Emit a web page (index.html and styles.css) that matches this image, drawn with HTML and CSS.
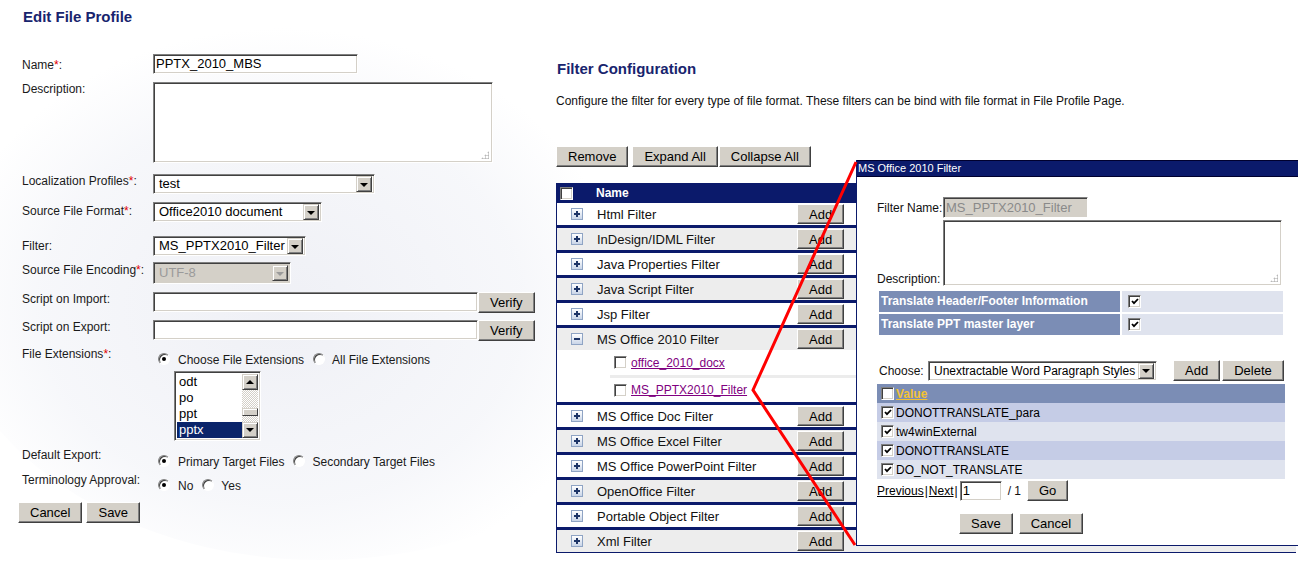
FILE: index.html
```html
<!DOCTYPE html>
<html>
<head>
<meta charset="utf-8">
<title>Edit File Profile</title>
<link rel="stylesheet" href="styles.css">
</head>
<body>
<div class="globe"></div>
<div class="page">
  <section class="profile">
    <h1 class="title">Edit File Profile</h1>
    <div class="form">
      <div class="row row-name">
        <span class="lbl pad4">Name<span class="req">*</span>:</span>
        <div class="field name-input">PPTX_2010_MBS</div>
      </div>
      <div class="row row-desc">
        <span class="lbl">Description:</span>
        <div class="field area desc-area"><span class="grip"></span></div>
      </div>
      <div class="row row-loc">
        <span class="lbl">Localization Profiles<span class="req">*</span>:</span>
        <div class="select sel-loc"><span class="sel-val">test</span><span class="sel-btn"></span></div>
      </div>
      <div class="row row-format">
        <span class="lbl pad2">Source File Format<span class="req">*</span>:</span>
        <div class="select sel-format"><span class="sel-val">Office2010 document</span><span class="sel-btn"></span></div>
      </div>
      <div class="row row-filter">
        <span class="lbl pad3">Filter:</span>
        <div class="select sel-filter"><span class="sel-val">MS_PPTX2010_Filter</span><span class="sel-btn"></span></div>
      </div>
      <div class="row row-enc">
        <span class="lbl pad2">Source File Encoding<span class="req">*</span>:</span>
        <div class="select disabled sel-enc"><span class="sel-val">UTF-8</span><span class="sel-btn"></span></div>
      </div>
      <div class="row row-import">
        <span class="lbl">Script on Import:</span>
        <div class="field script-input"></div>
        <button class="btn verify">Verify</button>
      </div>
      <div class="row row-export">
        <span class="lbl">Script on Export:</span>
        <div class="field script-input"></div>
        <button class="btn verify">Verify</button>
      </div>
      <div class="row row-ext">
        <span class="lbl">File Extensions<span class="req">*</span>:</span>
        <div class="choices ch-ext">
          <span class="radio on"></span><span class="choice-txt">Choose File Extensions</span>
          <span class="radio"></span><span class="choice-txt">All File Extensions</span>
        </div>
      </div>
      <div class="row row-list">
        <span class="lbl"></span>
        <div class="listbox">
          <div class="list-items">
            <div class="item">odt</div>
            <div class="item">po</div>
            <div class="item">ppt</div>
            <div class="item sel">pptx</div>
          </div>
          <div class="scroll">
            <span class="sb-btn up"></span>
            <span class="sb-track"><span class="sb-thumb"></span></span>
            <span class="sb-btn down"></span>
          </div>
        </div>
      </div>
      <div class="row row-default">
        <span class="lbl">Default Export:</span>
        <div class="choices ch-default">
          <span class="radio on"></span><span class="choice-txt">Primary Target Files</span>
          <span class="radio"></span><span class="choice-txt">Secondary Target Files</span>
        </div>
      </div>
      <div class="row row-term">
        <span class="lbl">Terminology Approval:</span>
        <div class="choices ch-term">
          <span class="radio on"></span><span class="choice-txt">No</span>
          <span class="radio"></span><span class="choice-txt">Yes</span>
        </div>
      </div>
      <div class="actions">
        <button class="btn">Cancel</button>
        <button class="btn">Save</button>
      </div>
    </div>
  </section>

  <section class="filters">
    <h2 class="title">Filter Configuration</h2>
    <p class="intro">Configure the filter for every type of file format. These filters can be bind with file format in File Profile Page.</p>
    <div class="toolbar">
      <button class="btn">Remove</button>
      <button class="btn">Expand All</button>
      <button class="btn">Collapse All</button>
    </div>
    <div class="ftable">
      <div class="fhead"><span class="cb"></span><span class="fhead-name">Name</span></div>
      <div class="frow"><span class="exp"></span><span class="fname">Html Filter</span><button class="btn add">Add</button></div>
      <div class="frow alt"><span class="exp"></span><span class="fname">InDesign/IDML Filter</span><button class="btn add">Add</button></div>
      <div class="frow"><span class="exp"></span><span class="fname">Java Properties Filter</span><button class="btn add">Add</button></div>
      <div class="frow alt"><span class="exp"></span><span class="fname">Java Script Filter</span><button class="btn add">Add</button></div>
      <div class="frow"><span class="exp"></span><span class="fname">Jsp Filter</span><button class="btn add">Add</button></div>
      <div class="frow alt open"><span class="exp minus"></span><span class="fname">MS Office 2010 Filter</span><button class="btn add">Add</button></div>
      <div class="subrows">
        <div class="subrow first"><span class="cb"></span><a class="sublink">office_2010_docx</a></div>
        <div class="subrow"><span class="cb"></span><a class="sublink">MS_PPTX2010_Filter</a></div>
      </div>
      <div class="frow"><span class="exp"></span><span class="fname">MS Office Doc Filter</span><button class="btn add">Add</button></div>
      <div class="frow alt"><span class="exp"></span><span class="fname">MS Office Excel Filter</span><button class="btn add">Add</button></div>
      <div class="frow"><span class="exp"></span><span class="fname">MS Office PowerPoint Filter</span><button class="btn add">Add</button></div>
      <div class="frow alt"><span class="exp"></span><span class="fname">OpenOffice Filter</span><button class="btn add">Add</button></div>
      <div class="frow"><span class="exp"></span><span class="fname">Portable Object Filter</span><button class="btn add">Add</button></div>
      <div class="frow alt last"><span class="exp"></span><span class="fname">Xml Filter</span><button class="btn add">Add</button><span class="fdesc">The filter for XML files.</span></div>
    </div>
  </section>

  <div class="popup">
    <div class="pop-title">MS Office 2010 Filter</div>
    <div class="pop-body">
      <div class="pf-name">
        <span class="pf-lbl">Filter Name:</span>
        <div class="field disabled fn-input">MS_PPTX2010_Filter</div>
      </div>
      <div class="pf-desc">
        <span class="pf-lbl">Description:</span>
        <div class="field area pf-area"><span class="grip"></span></div>
      </div>
      <div class="opts">
        <span class="opt-lbl">Translate Header/Footer Information</span>
        <span class="opt-val"><span class="cb"><svg class="tick" viewBox="0 0 8 7"><path d="M1 3l2 2.2L7 1"/></svg></span></span>
        <span class="opt-lbl">Translate PPT master layer</span>
        <span class="opt-val"><span class="cb"><svg class="tick" viewBox="0 0 8 7"><path d="M1 3l2 2.2L7 1"/></svg></span></span>
      </div>
      <div class="choose">
        <span class="choose-lbl">Choose:</span>
        <div class="select sel-choose"><span class="sel-val">Unextractable Word Paragraph Styles</span><span class="sel-btn"></span></div>
        <button class="btn add-style">Add</button>
        <button class="btn del-style">Delete</button>
      </div>
      <div class="vtable">
        <div class="vhead"><span class="cb"></span><a class="vlink">Value</a></div>
        <div class="vrow"><span class="cb"><svg class="tick" viewBox="0 0 8 7"><path d="M1 3l2 2.2L7 1"/></svg></span><span class="vtext">DONOTTRANSLATE_para</span></div>
        <div class="vrow light"><span class="cb"><svg class="tick" viewBox="0 0 8 7"><path d="M1 3l2 2.2L7 1"/></svg></span><span class="vtext">tw4winExternal</span></div>
        <div class="vrow"><span class="cb"><svg class="tick" viewBox="0 0 8 7"><path d="M1 3l2 2.2L7 1"/></svg></span><span class="vtext">DONOTTRANSLATE</span></div>
        <div class="vrow light"><span class="cb"><svg class="tick" viewBox="0 0 8 7"><path d="M1 3l2 2.2L7 1"/></svg></span><span class="vtext">DO_NOT_TRANSLATE</span></div>
      </div>
      <div class="pager">
        <a class="plink">Previous</a><span class="pipe">|</span><a class="plink">Next</a><span class="pipe">|</span>
        <div class="field page-input">1</div>
        <span class="page-total">/ 1</span>
        <button class="btn go">Go</button>
      </div>
      <div class="pop-actions">
        <button class="btn">Save</button>
        <button class="btn">Cancel</button>
      </div>
    </div>
  </div>

  <svg class="callout" width="1304" height="572" viewBox="0 0 1304 572">
    <polyline points="856,162 753,390 855,545" fill="none" stroke="#ff0000" stroke-width="3" stroke-linejoin="miter"/>
  </svg>
</div>
</body>
</html>
```

FILE: styles.css
```css
* { box-sizing: border-box; }
html, body { margin: 0; padding: 0; }
body {
  width: 1304px;
  height: 572px;
  overflow: hidden;
  position: relative;
  background: #fff;
  font-family: "Liberation Sans", Arial, sans-serif;
  font-size: 12px;
  color: #1a1a1a;
}

.globe {
  position: absolute;
  left: -60px;
  top: 0;
  width: 760px;
  height: 560px;
  border-radius: 50%;
  background:
    radial-gradient(ellipse 45% 50% at 45% 55%, rgba(226,228,238,0.55) 0%, rgba(236,238,245,0.45) 70%, rgba(255,255,255,0) 100%);
  pointer-events: none;
}

.page { position: relative; display: flex; height: 572px; }

/* ---------- left: profile form ---------- */
.profile { width: 556px; flex: none; padding: 8px 0 0 22px; }
.title {
  margin: 0;
  font-size: 15px;
  line-height: 18px;
  font-weight: bold;
  color: #18246e;
  padding-left: 1px;
}
.form { margin-top: 28px; }
.row { display: flex; align-items: flex-start; }
.lbl { width: 131px; flex: none; line-height: 14px; color: #1a1a1a; }
.pad2 { padding-top: 2px; }
.pad3 { padding-top: 3px; }
.pad4 { padding-top: 4px; }
.req { color: #e00000; }

.row-name { height: 28px; }
.row-desc { height: 92px; }
.row-loc { height: 28px; }
.row-format { height: 34px; }
.row-filter { height: 25px; }
.row-enc { height: 31px; }
.row-import { height: 28px; }
.row-export { height: 27px; }
.row-ext { height: 24px; }
.row-list { height: 77px; }
.row-default { height: 25px; }
.row-term { height: 29px; }

.field {
  height: 20px;
  background: #fff;
  border: 1px solid;
  border-color: #808080 #fff #fff #808080;
  box-shadow: inset 1px 1px 0 #404040, inset -1px -1px 0 #d4d0c8;
  font-size: 13px;
  line-height: 18px;
  padding: 0 2px;
  white-space: nowrap;
  overflow: hidden;
  color: #000;
}
.field.disabled { background: #d4d0c8; color: #8a8a8a; }
.area { position: relative; }
.grip {
  position: absolute;
  right: 3px;
  bottom: 3px;
  width: 8px;
  height: 8px;
  background:
    radial-gradient(circle, #b8b8b8 0.9px, transparent 1.2px) 0 0 / 3px 3px;
  clip-path: polygon(100% 0, 100% 100%, 0 100%);
}
.name-input { width: 205px; }
.desc-area { width: 340px; height: 81px; }
.script-input { width: 325px; }
.verify { margin-left: 3px; }

.select {
  display: flex;
  height: 20px;
  background: #fff;
  border: 1px solid;
  border-color: #808080 #fff #fff #808080;
  box-shadow: inset 1px 1px 0 #404040, inset -1px -1px 0 #d4d0c8;
  padding: 2px;
}
.sel-val {
  flex: 1;
  font-size: 13px;
  line-height: 16px;
  height: 16px;
  margin-top: -1px;
  padding-left: 3px;
  white-space: nowrap;
  overflow: hidden;
  color: #000;
}
.sel-btn {
  width: 16px;
  height: 16px;
  margin-top: -1px;
  flex: none;
  background: #d4d0c8;
  border: 1px solid;
  border-color: #d4d0c8 #404040 #404040 #d4d0c8;
  box-shadow: inset 1px 1px 0 #fff, inset -1px -1px 0 #808080;
  display: flex;
  align-items: center;
  justify-content: center;
}
.sel-btn::after {
  content: "";
  border-left: 4px solid transparent;
  border-right: 4px solid transparent;
  border-top: 4px solid #000;
  margin-top: 1px;
}
.select.disabled { background: #d4d0c8; height: 22px; margin-top: 1px; padding-top: 3px; }
.select.disabled .sel-val { color: #9a9a9a; }
.select.disabled .sel-btn::after { border-top-color: #9a9a9a; }
.sel-loc { width: 222px; }
.sel-format { width: 169px; }
.sel-filter { width: 153px; }
.sel-enc { width: 138px; }

.btn {
  height: 21px;
  padding: 0 11px;
  margin: 0;
  background: #d4d0c8;
  border: 1px solid;
  border-color: #fff #404040 #404040 #fff;
  box-shadow: inset -1px -1px 0 #808080;
  font-family: "Liberation Sans", Arial, sans-serif;
  font-size: 13px;
  line-height: 18px;
  color: #000;
  flex: none;
}

.choices { display: flex; align-items: center; line-height: 14px; }
.ch-ext { margin-top: 4px; }
.ch-default { margin-top: 5px; }
.ch-term { margin-top: 4px; }
.radio {
  width: 12px;
  height: 12px;
  flex: none;
  border-radius: 50%;
  background: #fff;
  border: 1px solid;
  border-color: #808080 #fff #fff #808080;
  box-shadow: inset 1px 1px 0 #404040;
  position: relative;
  margin: 0 8px 0 5px;
}
.choice-txt + .radio { margin-left: 9px; margin-right: 7px; }
.radio.on::after {
  content: "";
  position: absolute;
  left: 3px;
  top: 3px;
  width: 4px;
  height: 4px;
  border-radius: 50%;
  background: #000;
}
.choice-txt { color: #1a1a1a; padding-top: 2px; }

.listbox {
  margin-left: 21px;
  width: 87px;
  height: 70px;
  display: flex;
  background: #fff;
  border: 1px solid;
  border-color: #808080 #fff #fff #808080;
  box-shadow: inset 1px 1px 0 #404040, inset -1px -1px 0 #d4d0c8;
  padding: 2px;
}
.list-items { flex: 1; }
.item { height: 16px; line-height: 16px; padding-left: 2px; font-size: 13px; color: #000; }
.item.sel { background: #0a246a; color: #fff; }
.scroll { width: 16px; display: flex; flex-direction: column; }
.sb-btn {
  height: 16px;
  background: #d4d0c8;
  border: 1px solid;
  border-color: #d4d0c8 #404040 #404040 #d4d0c8;
  box-shadow: inset 1px 1px 0 #fff, inset -1px -1px 0 #808080;
  display: flex;
  align-items: center;
  justify-content: center;
}
.sb-btn.up::after {
  content: "";
  border-left: 4px solid transparent;
  border-right: 4px solid transparent;
  border-bottom: 4px solid #000;
}
.sb-btn.down::after {
  content: "";
  border-left: 4px solid transparent;
  border-right: 4px solid transparent;
  border-top: 4px solid #000;
}
.sb-track {
  flex: 1;
  background: repeating-conic-gradient(#d4d0c8 0 25%, #fff 0 50%) 0 0 / 2px 2px;
  display: flex;
  flex-direction: column;
  justify-content: flex-end;
  padding-bottom: 6px;
}
.sb-thumb {
  height: 8px;
  background: #d4d0c8;
  border: 1px solid;
  border-color: #d4d0c8 #404040 #404040 #d4d0c8;
  box-shadow: inset 1px 1px 0 #fff;
}

.actions { display: flex; gap: 4px; margin-left: -4px; }

/* ---------- right: filter configuration ---------- */
.filters { flex: 1; padding: 60px 8px 0 0; }
.intro { margin: 16px 0 0; line-height: 14px; font-size: 12px; color: #111; white-space: nowrap; }
.toolbar { margin-top: 38px; display: flex; }
.toolbar .btn:first-child { margin-right: 4px; }
.toolbar .btn:nth-child(2) { margin-right: 1px; }

.ftable {
  margin-top: 16px;
  border-left: 1px solid #0b1a6b;
  border-bottom: 1px solid #0b1a6b;
}
.fhead {
  height: 20px;
  background: #0b1a6b;
  display: flex;
  align-items: center;
}
.fhead .cb { margin-left: 3px; }
.fhead-name { margin-left: 23px; color: #fff; font-weight: bold; font-size: 12px; }
.frow {
  height: 25px;
  display: flex;
  align-items: center;
  background: #fff;
  border-bottom: 3px solid #0b1a6b;
}
.frow.alt { background: #ededed; }
.frow.open { height: 22px; border-bottom: 0; }
.frow.last { height: 22px; border-bottom: 0; }
.exp {
  width: 12px;
  height: 12px;
  margin-left: 14px;
  flex: none;
  border: 1px solid #8fa4c4;
  background: linear-gradient(#ffffff, #c9d5e8);
  position: relative;
}
.exp::before, .exp::after {
  content: "";
  position: absolute;
  background: #1d3466;
}
.exp::before { left: 2px; top: 4px; width: 6px; height: 2px; }
.exp::after { left: 4px; top: 2px; width: 2px; height: 6px; }
.exp.minus::after { display: none; }
.fname { width: 200px; margin-left: 14px; font-size: 13px; color: #111; white-space: nowrap; flex: none; }
.add { height: 20px; line-height: 17px; }
.fdesc { margin-left: 76px; font-size: 12px; color: #222; white-space: nowrap; }

.subrows { background: #fff; border-bottom: 3px solid #0b1a6b; }
.subrow {
  height: 24px;
  margin-left: 53px;
  padding-left: 4px;
  display: flex;
  align-items: center;
}
.subrow.first { height: 28px; border-bottom: 3px solid #ececec; }
.sublink { margin-left: 4px; color: #800080; text-decoration: underline; font-size: 12px; }

.cb {
  width: 13px;
  height: 13px;
  flex: none;
  background: #fff;
  border: 1px solid;
  border-color: #808080 #fff #fff #808080;
  box-shadow: inset 1px 1px 0 #404040, inset -1px -1px 0 #d4d0c8;
  display: inline-flex;
  align-items: center;
  justify-content: center;
}
.tick { width: 8px; height: 7px; }
.tick path { fill: none; stroke: #000; stroke-width: 1.8; }

/* ---------- popup ---------- */
.popup {
  position: absolute;
  left: 856px;
  top: 160px;
  width: 442px;
  height: 386px;
  background: #fff;
  border-left: 1px solid #0b1a6b;
  border-bottom: 1px solid #0b1a6b;
  z-index: 2;
}
.pop-title {
  height: 17px;
  background: #0b1a6b;
  border-top: 1px solid #00002e;
  border-bottom: 1px solid #00002e;
  color: #fff;
  font-size: 11px;
  line-height: 15px;
  padding-left: 1px;
}
.pop-body { padding: 20px 0 0 20px; }
.pf-name { display: flex; align-items: center; }
.pf-lbl { width: 66px; flex: none; line-height: 14px; color: #111; }
.fn-input { width: 145px; height: 21px; line-height: 19px; }
.pf-desc { display: flex; align-items: flex-end; margin-top: 2px; }
.pf-area { width: 339px; height: 66px; }

.opts {
  margin: 5px 0 0 2px;
  display: grid;
  grid-template-columns: 241px 161px;
  grid-auto-rows: 21px;
  gap: 2px;
}
.opt-lbl {
  background: #7b8db5;
  color: #fff;
  font-weight: bold;
  line-height: 21px;
  padding-left: 2px;
  white-space: nowrap;
}
.opt-val { background: #dfe3ee; display: flex; align-items: center; padding-left: 6px; }

.choose { display: flex; align-items: center; margin: 25px 0 0 2px; }
.choose-lbl { width: 49px; color: #111; }
.sel-choose { width: 229px; }
.sel-choose .sel-val { font-size: 12px; }
.add-style { margin-left: 16px; }
.del-style { margin-left: 2px; }

.vtable { margin-top: 3px; width: 408px; }
.vhead, .vrow { height: 19px; display: flex; align-items: center; padding-left: 4px; }
.vhead { background: #7b8db5; }
.vlink { margin-left: 2px; color: #f3c233; font-weight: bold; text-decoration: underline; }
.vrow { background: #c5cce6; }
.vrow.light { background: #dfe3ee; }
.vtext { margin-left: 2px; font-size: 12px; color: #000; }

.pager { display: flex; align-items: center; margin-top: 1px; height: 21px; }
.plink { color: #000; text-decoration: underline; }
.pipe { color: #000; padding: 0 1px; }
.page-input { width: 42px; margin-left: 1px; }
.page-total { margin-left: 6px; color: #111; }
.go { margin-left: 6px; }

.pop-actions { display: flex; gap: 6px; margin: 12px 0 0 82px; }

.callout { position: absolute; left: 0; top: 0; z-index: 3; pointer-events: none; }
```
